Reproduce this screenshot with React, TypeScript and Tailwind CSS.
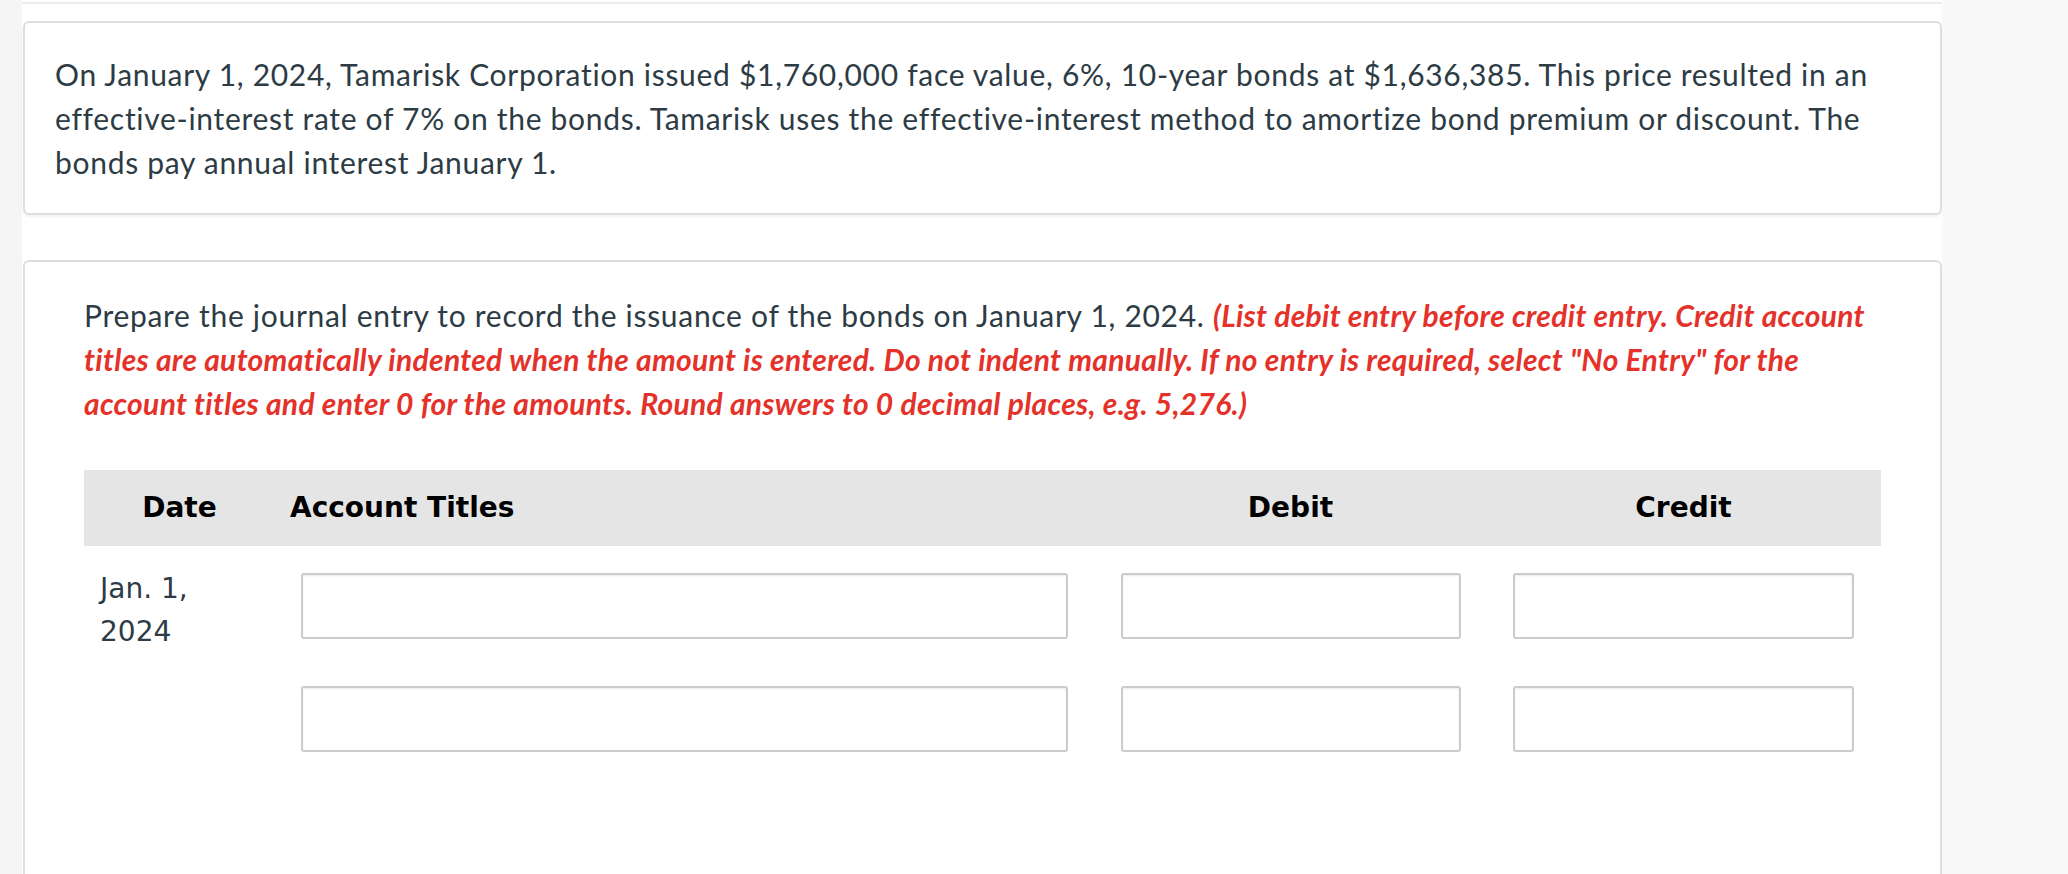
import React from 'react';

const rows = [0, 1];

function Field() {
  return (
    <input
      type="text"
      className="h-[66px] w-full rounded-[3px] border-2 border-[#cbcbcb] bg-white shadow-[inset_0_1px_2px_rgba(0,0,0,0.08)] outline-none"
    />
  );
}

export default function App() {
  return (
    <div className="flex h-[874px] w-full overflow-hidden bg-[#f9f9f9] font-['Lato',sans-serif] text-[#2d3b45]">
      <div className="w-[22px] shrink-0 bg-[#f5f5f5]" />

      <div className="w-[1920px] shrink-0 bg-white">
        {/* top rule */}
        <div className="mt-[2px] h-[2px] bg-[#ededed]" />

        {/* Question stem */}
        <div className="ml-[1px] mt-[17px] rounded-[6px] border-2 border-[#dedede] bg-white px-[30px] py-[29px] shadow-[0_2px_3px_rgba(0,0,0,0.06)]">
          <p className="text-[30px] leading-[44px] tracking-[0.7px]">
            On January 1, 2024, Tamarisk Corporation issued $1,760,000 face value, 6%, 10-year bonds at $1,636,385. This
            price resulted in an effective-interest rate of 7% on the bonds. Tamarisk uses the effective-interest method to
            amortize bond premium or discount. The bonds pay annual interest January 1.
          </p>
        </div>

        {/* Part */}
        <div className="ml-[1px] mt-[45px] h-[700px] rounded-[6px] border-2 border-[#dedede] bg-white px-[59px] pt-[31px]">
          <p className="text-[30px] leading-[44px] tracking-[0.7px]">
            Prepare the journal entry to record the issuance of the bonds on January 1, 2024.{' '}
            <span className="font-bold italic tracking-[0.3px] text-[#e4322a]">
              (List debit entry before credit entry. Credit account titles are automatically indented when the amount is
              entered. Do not indent manually. If no entry is required, select "No Entry" for the account titles and enter 0
              for the amounts. Round answers to 0 decimal places, e.g. 5,276.)
            </span>
          </p>

          <div className="mt-[45px] font-['DejaVu_Sans',Verdana,sans-serif]">
            <div className="grid h-[76px] grid-cols-[191px_819px_393px_393px] items-center bg-[#e5e5e5] text-[28px] font-bold text-black">
              <div className="text-center">Date</div>
              <div className="pl-[15px]">Account Titles</div>
              <div className="text-center">Debit</div>
              <div className="text-center">Credit</div>
            </div>

            <div className="pt-[27px]">
              {rows.map((r) => (
                <div key={r} className="grid h-[113px] grid-cols-[191px_819px_393px_393px] items-start">
                  <div className="-mt-[6px] px-4 text-[28px] leading-[43px] text-[#2d3b45]">
                    {r === 0 ? 'Jan. 1, 2024' : ''}
                  </div>
                  <div className="px-[26px]">
                    <Field />
                  </div>
                  <div className="pl-[27px] pr-[26px]">
                    <Field />
                  </div>
                  <div className="px-[26px]">
                    <Field />
                  </div>
                </div>
              ))}
            </div>
          </div>
        </div>
      </div>

      <div className="flex-1 bg-[#f9f9f9]" />
    </div>
  );
}
